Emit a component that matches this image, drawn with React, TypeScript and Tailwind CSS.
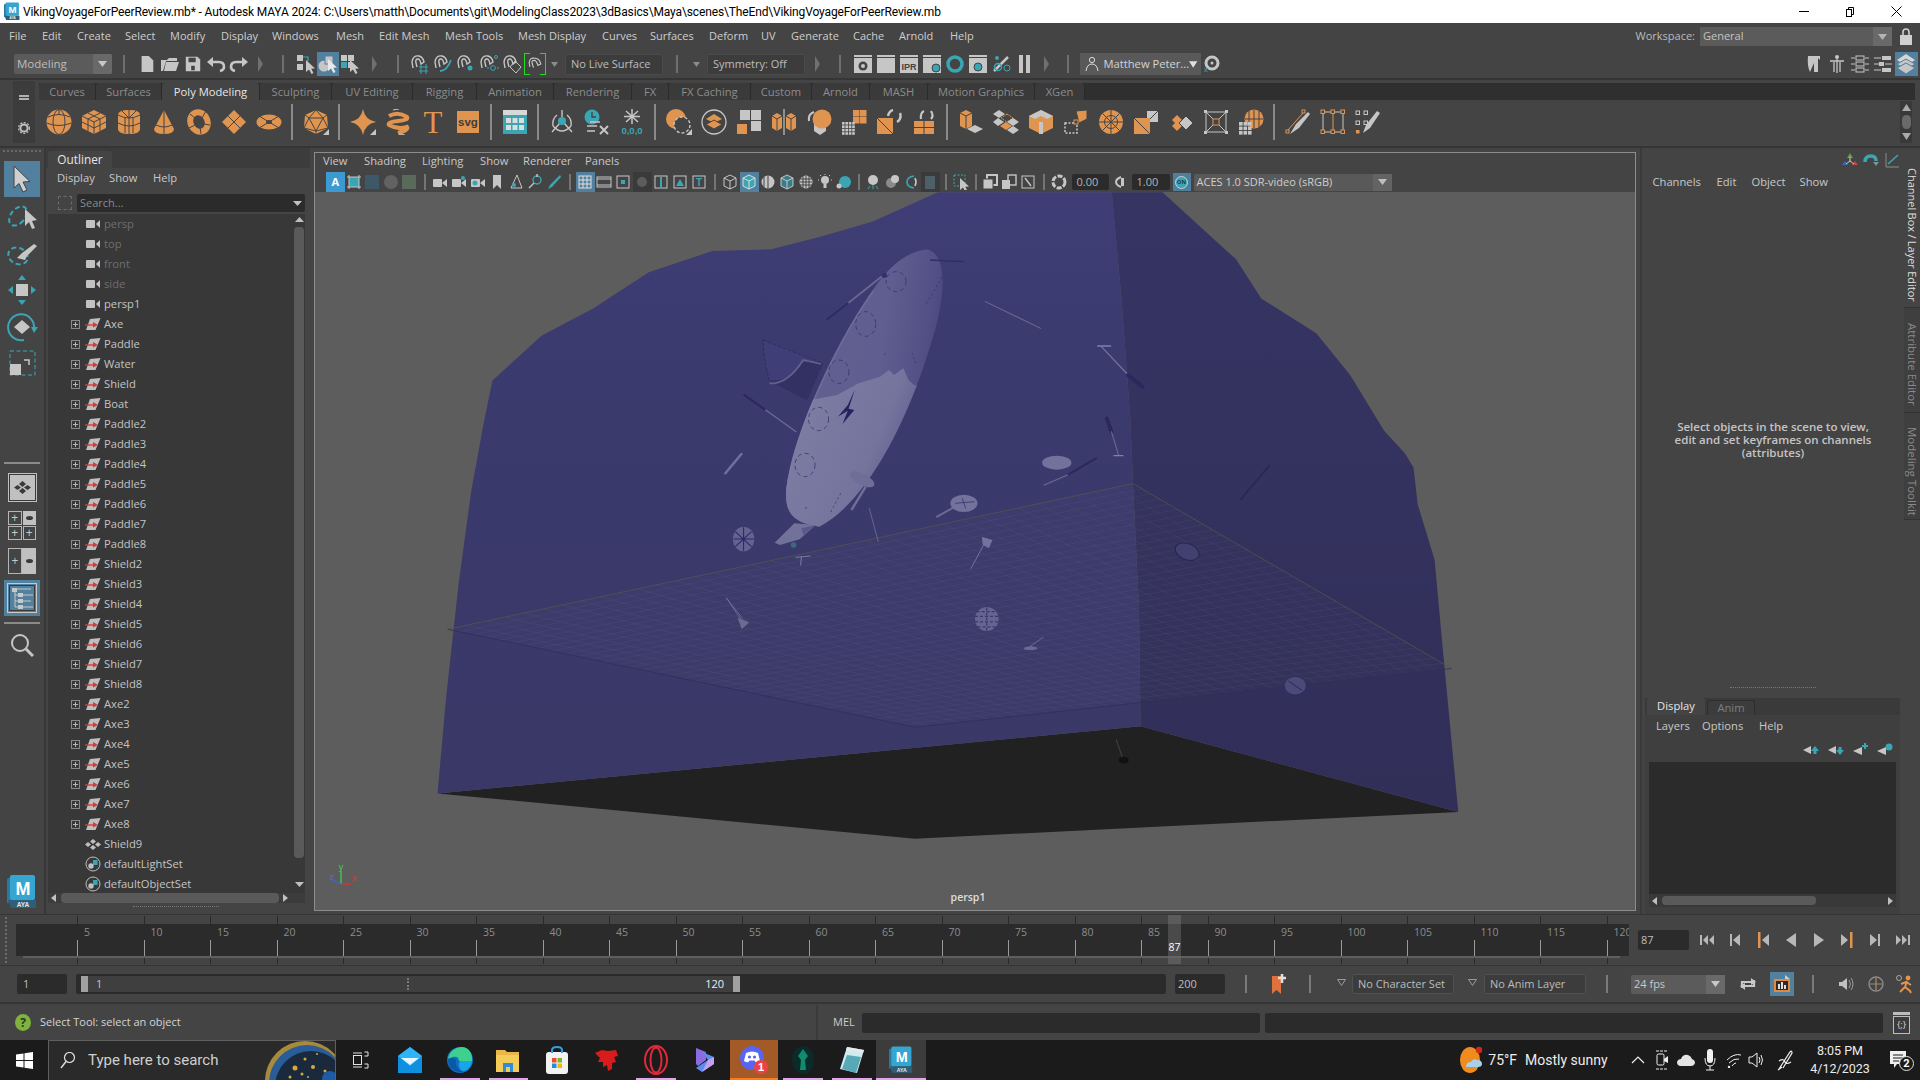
import type { ReactNode } from 'react'

const G = '#c6c6c6'
const O = '#df9450'
const T = '#3aa6b4'
const D = '#444444'

function Ico({ s = 20, vb = 20, children }: { s?: number; vb?: number; children: ReactNode }) {
  return (
    <svg width={s} height={s} viewBox={`0 0 ${vb} ${vb}`} className="block shrink-0">
      {children}
    </svg>
  )
}

const Lines = ({ d, c = D, w = 1 }: { d: string; c?: string; w?: number }) => (
  <path d={d} fill="none" stroke={c} strokeWidth={w} />
)

const Corner = () => <polygon points="26,20 26,26 20,26" fill={G} />

const Cur = ({ x = 0, y = 0, c = G }: { x?: number; y?: number; c?: string }) => (
  <path transform={`translate(${x} ${y})`} d="M0 0 L0 12 L3 9.5 L5.5 14 L7.5 13 L5.3 8.7 L9 8.5 Z" fill={c} />
)

/* ---------- shelf icons ---------- */
const shelfIcons: (ReactNode | 'sep')[] = [
  <Ico s={26} vb={26}><circle cx="13" cy="13" r="12.5" fill={O} /><ellipse cx="13" cy="13" rx="6" ry="12.5" fill="none" stroke={D} /><Lines d="M2 8 Q13 3 24 8 M.5 14 Q13 19 25.5 14 M13 .5 V6" /></Ico>,
  <Ico s={26} vb={26}><polygon points="13,1 25,7 25,19 13,25 1,19 1,7" fill={O} /><Lines d="M1 7 L13 13 L25 7 M13 13 V25 M7 4 L19 10 V22 M19 4 L7 10 V22 M1 13 L13 19 L25 13" /></Ico>,
  <Ico s={26} vb={26}><path d="M2 6 Q2 1 13 1 Q24 1 24 6 V20 Q24 25 13 25 Q2 25 2 20 Z" fill={O} /><Lines d="M2 6 Q13 12 24 6 M2 14 Q13 20 24 14 M13 1 V25 M6 2 L13 9 L20 2 M9 9 V24 M17 9 V24" /></Ico>,
  <Ico s={26} vb={26}><path d="M13 1 L23 20 Q23 25 13 25 Q3 25 3 20 Z" fill={O} /><Lines d="M13 1 V25 M5 16 Q13 20 21 16" /></Ico>,
  <Ico s={26} vb={26}><ellipse cx="13" cy="13" rx="8.5" ry="10" transform="rotate(-25 13 13)" fill="none" stroke={O} strokeWidth="6" /><Lines d="M4 5 L10 10 M20 2 L16 9 M24 16 L18 15 M15 25 L14 18 M3 19 L9 16" /></Ico>,
  <Ico s={26} vb={26}><polygon points="13,1 25,13 13,25 1,13" fill={O} /><Lines d="M7 7 L19 19 M19 7 L7 19" /></Ico>,
  <Ico s={26} vb={26}><ellipse cx="13" cy="13" rx="12.5" ry="7.5" fill={O} /><Lines d="M3 7 L23 19 M23 7 L3 19" /><ellipse cx="13" cy="13" rx="3" ry="2" fill={D} /></Ico>,
  'sep',
  <Ico s={26} vb={26}><polygon points="13,1 24,6 25,19 13,25 1,19 2,6" fill={O} /><Lines d="M13 1 L6 9 L20 9 Z M6 9 L13 22 L20 9 M6 9 L2 6 M6 9 L1 19 M20 9 L24 6 M20 9 L25 19 M13 22 V25 M13 22 L1 19 M13 22 L25 19" /><Corner /></Ico>,
  'sep',
  <Ico s={26} vb={26}><path d="M13 0 Q15 11 26 13 Q15 15 13 26 Q11 15 0 13 Q11 11 13 0 Z" fill={O} /><Corner /></Ico>,
  <Ico s={26} vb={26}><Lines d="M4 7 Q13 2 22 8 Q24 11 13 12 Q2 13 4 16 Q13 21 22 18 Q24 21 13 24" c={O} w={4} /><Lines d="M8 1 L14 0 M14 25 L20 26" c={G} /></Ico>,
  <Ico s={26} vb={26}><text x="13" y="24" textAnchor="middle" fontFamily="'Liberation Serif',serif" fontSize="31" fill={O}>T</text></Ico>,
  <Ico s={26} vb={26}><rect x="2" y="2" width="22" height="22" fill={O} /><text x="13" y="16.5" textAnchor="middle" fontFamily="'Liberation Sans',sans-serif" fontWeight="700" fontSize="11.5" fill="#3c3c3c">svg</text></Ico>,
  'sep',
  <Ico s={26} vb={26}><rect x="1" y="1" width="24" height="24" fill={T} /><rect x="1" y="1" width="24" height="5" fill="#d8d8d8" /><g fill="#dcdcdc"><rect x="4" y="9" width="5" height="5" /><rect x="10.5" y="9" width="5" height="5" /><rect x="17" y="9" width="5" height="5" /><rect x="4" y="16" width="5" height="5" /><rect x="10.5" y="16" width="5" height="5" /><rect x="17" y="16" width="5" height="5" /></g></Ico>,
  'sep',
  <Ico s={26} vb={26}><Lines d="M13 1 V8 M11 14 L3 23 M15 14 L23 23 M4 17 Q13 27 22 17 M8 6 Q3 10 4 17 M18 6 Q23 10 22 17" c={G} w={1.4} /><circle cx="13" cy="12" r="4" fill={T} /></Ico>,
  <Ico s={26} vb={26}><circle cx="8" cy="8" r="7.5" fill={T} /><Lines d="M8 3 V8 H12" c={D} w={1.4} /><Lines d="M3 17 H13 M3 22 H11 M6 13 H16" c={G} w={1.4} /><Lines d="M16 17 L24 25 M24 17 L16 25" c={G} w={2} /></Ico>,
  <Ico s={26} vb={26}><Lines d="M13 0 V15 M7 2 L19 13 M19 2 L7 13 M5 7.5 H21" c={G} w={1.5} /><text x="13" y="25" textAnchor="middle" fontFamily="'Liberation Sans',sans-serif" fontWeight="700" fontSize="9.5" fill={T}>0,0,0</text></Ico>,
  'sep',
  <Ico s={26} vb={26}><circle cx="10" cy="10" r="10" fill={O} /><circle cx="16" cy="16" r="8" fill={D} stroke={G} strokeDasharray="3 2" strokeWidth="1.4" /><Corner /></Ico>,
  <Ico s={26} vb={26}><circle cx="13" cy="13" r="12" fill="none" stroke={G} strokeWidth="1.3" /><polygon points="13,5 21,10 13,14 5,10" fill={O} /><polygon points="13,11 21,15.5 13,20 5,15.5" fill={O} stroke={D} /></Ico>,
  <Ico s={26} vb={26}><rect x="4" y="1" width="10" height="10" fill={G} /><rect x="15" y="1" width="10" height="10" fill={G} /><rect x="15" y="12" width="10" height="10" fill={G} /><rect x="1" y="15" width="10" height="10" fill={O} /></Ico>,
  <Ico s={26} vb={26}><path d="M1 7 L6 4 L11 7 V19 L6 22 L1 19 Z M15 7 L20 4 L25 7 V19 L20 22 L15 19 Z" fill={O} /><Lines d="M1 7 L6 10 L11 7 M6 10 V22 M15 7 L20 10 L25 7 M20 10 V22" /><Lines d="M13 0 V26" c="#d8d8d8" /></Ico>,
  <Ico s={26} vb={26}><polygon points="8,13 14,10 20,13 20,22 14,26 8,22" fill={G} /><circle cx="16" cy="10" r="9.5" fill={O} /><Lines d="M3 12 Q2 5 8 3" c={G} w={2} /></Ico>,
  <Ico s={26} vb={26}><g fill={O}><rect x="12" y="1" width="6.5" height="6.5" /><rect x="19" y="1" width="6.5" height="6.5" /><rect x="12" y="8" width="6.5" height="6.5" /><rect x="19" y="8" width="6.5" height="6.5" /></g><g fill={G}>{[0, 1, 2, 3].map((a) => [0, 1, 2, 3].map((b) => <rect key={`${a}${b}`} x={1 + a * 3.4} y={13 + b * 3.4} width="2.6" height="2.6" />))}</g></Ico>,
  <Ico s={26} vb={26}><rect x="1" y="9" width="16" height="16" fill={O} /><Lines d="M1 9 L17 25" /><Lines d="M12 7 Q13 2 17 1 M24 4 Q26 10 21 13" c={G} w={2.4} /></Ico>,
  <Ico s={26} vb={26}><g fill={O}><rect x="3" y="12" width="9.5" height="6" /><rect x="13.5" y="12" width="9.5" height="6" /><rect x="3" y="19" width="9.5" height="6" /><rect x="13.5" y="19" width="9.5" height="6" /></g><Lines d="M10 10 Q9 4 13 2 M20 2 Q23 7 20 10" c={G} w={2.2} /></Ico>,
  'sep',
  <Ico s={26} vb={26}><polygon points="11,18 19,22 11,26 3,22" fill={G} transform="translate(6 -2)" /><path d="M2 4 L8 1 L14 4 V17 L8 20 L2 17 Z" fill={O} /><Lines d="M2 4 L8 7 L14 4 M8 7 V20" /></Ico>,
  <Ico s={26} vb={26}><polygon points="6,1 12,5 6,9 0,5" fill={G} /><polygon points="14,5 20,9 14,13 8,9" fill="none" stroke={O} strokeDasharray="2 1" /><polygon points="20,9 26,13 20,17 14,13" fill={G} /><polygon points="5,9 11,13 5,17 0,13" fill={G} /><polygon points="13,13 19,17 13,21 7,17" fill={O} /><polygon points="20,17 26,21 20,25 14,21" fill={G} /></Ico>,
  <Ico s={26} vb={26}><polygon points="13,1 25,7 25,19 13,25 1,19 1,7" fill={O} /><polygon points="13,1 25,7 19,10 13,7 7,10 1,7" fill={G} /><rect x="11" y="13" width="4" height="12" fill={G} /></Ico>,
  <Ico s={26} vb={26}><polygon points="13,2 24,1 24,10 16,14" fill={O} stroke={D} /><rect x="2" y="14" width="12" height="10" fill="none" stroke={G} strokeDasharray="2 1.5" strokeWidth="1.5" /><rect x="11" y="11" width="4" height="4" fill={D} stroke={O} /></Ico>,
  <Ico s={26} vb={26}><circle cx="13" cy="13" r="12" fill={O} /><circle cx="13" cy="13" r="6.5" fill="none" stroke={D} /><Lines d="M1 13 H25 M13 1 V25 M4.5 4.5 L21.5 21.5 M21.5 4.5 L4.5 21.5" /></Ico>,
  <Ico s={26} vb={26}><polygon points="14,2 25,2 25,13 14,13" fill={G} /><Lines d="M14 13 L25 2" /><rect x="1" y="9" width="16" height="16" fill={O} /><Lines d="M1 9 L17 25" /></Ico>,
  <Ico s={26} vb={26}><polygon points="9,6 14,11 9,16 4,11" fill={O} /><polygon points="9,12 14,17 9,22 4,17" fill={O} /><polygon points="18,7 25,14 18,21 11,14" fill={G} stroke={D} /></Ico>,
  <Ico s={26} vb={26}><rect x="3" y="3" width="20" height="20" fill="none" stroke={G} /><Lines d="M3 3 L10 10 M23 3 L16 10 M3 23 L10 16 M23 23 L16 16" c={G} /><rect x="10" y="10" width="6" height="6" fill="none" stroke={O} /><g fill={G}><rect x="1" y="1" width="3" height="3" /><rect x="22" y="1" width="3" height="3" /><rect x="1" y="22" width="3" height="3" /><rect x="22" y="22" width="3" height="3" /></g></Ico>,
  <Ico s={26} vb={26}><circle cx="16" cy="10" r="9.5" fill={O} /><Lines d="M7 10 H25 M16 1 V19 M11 2 V18 M21 2 V18" /><g fill={G}>{[0, 1, 2].map((a) => [0, 1, 2].map((b) => <rect key={`${a}${b}`} x={1 + a * 4.5} y={13 + b * 4.5} width="3.6" height="3.6" />))}</g></Ico>,
  'sep',
  <Ico s={26} vb={26}><Lines d="M3 21 L18 4" c={O} w={1} /><rect x="1" y="21" width="3" height="3" fill="none" stroke={O} /><rect x="17" y="1" width="3" height="3" fill="none" stroke={O} /><path d="M25 5 L23 3 L11 15 L5 25 L14 19 Z" fill={G} /></Ico>,
  <Ico s={26} vb={26}><rect x="3" y="3" width="20" height="20" fill="none" stroke={G} /><g fill={D} stroke={O}><rect x="1" y="1" width="3.5" height="3.5" /><rect x="11" y="1" width="3.5" height="3.5" /><rect x="21" y="1" width="3.5" height="3.5" /><rect x="1" y="21" width="3.5" height="3.5" /><rect x="11" y="21" width="3.5" height="3.5" /><rect x="21" y="21" width="3.5" height="3.5" /></g><Lines d="M13 4 V21" c={O} /></Ico>,
  <Ico s={26} vb={26}><g fill="none" stroke={G}><rect x="1" y="2" width="3.5" height="3.5" /><rect x="9" y="2" width="3.5" height="3.5" /><rect x="1" y="12" width="3.5" height="3.5" /><rect x="9" y="12" width="3.5" height="3.5" /></g><rect x="1" y="21" width="3.5" height="3.5" fill={O} /><path d="M25 4 L22 2 L11 16 L8 24 L15 19 Z" fill={G} /></Ico>,
]

/* ---------- status line ---------- */
const StatusSep = ({ w }: { w: string }) => (
  <div className={`${w} h-full flex items-center justify-center shrink-0`}>
    <div className="w-[2px] h-[18px] bg-[#6f6f6f]" />
  </div>
)

const StatusArrow = ({ w }: { w: string }) => (
  <div className={`${w} h-full flex items-center justify-center shrink-0`}>
    <svg width="5" height="16" viewBox="0 0 5 16"><polygon points="0,0 5,8 0,16" fill="#707070" /></svg>
  </div>
)

const StatusTri = ({ w }: { w: string }) => (
  <div className={`${w} h-full flex items-center justify-center shrink-0`}>
    <svg width="7" height="5" viewBox="0 0 7 5"><polygon points="0,0 7,0 3.5,5" fill="#8c8c8c" /></svg>
  </div>
)

const SlotB = ({ children, on, w = 'w-[22px]' }: { children: ReactNode; on?: boolean; w?: string }) => (
  <div className={`${w} h-[24px] flex items-center justify-center shrink-0 ${on ? 'bg-[#52809f]' : ''}`}>{children}</div>
)

const Magnet = ({ children }: { children?: ReactNode }) => (
  <Ico s={22} vb={22}>
    <Lines d="M4 15 L3 9 Q4 2 10 3 Q14 4 15 9 L12 11 Q11 6 9 6 Q6 6 7 10 L8 14" c={G} w={1.4} />
    {children}
  </Ico>
)

const Clap = ({ children }: { children?: ReactNode }) => (
  <Ico s={22} vb={22}>
    <Lines d="M2 3 H20" c={G} w={2} />
    <rect x="2" y="5" width="18" height="15" fill={G} />
    {children}
  </Ico>
)

function StatusLine() {
  return (
    <div className="h-[28px] flex items-center pl-[14px] pr-[2.5px] bg-[#444444] shrink-0">
      <div className="w-[98px] h-[20px] flex bg-[#5b5b5b] rounded-[2px] shrink-0 text-[#bdbdbd] text-[11.5px] items-center">
        <span className="flex-1 pl-[3px]">Modeling</span>
        <div className="w-[19px] h-full bg-[#696969] flex items-center justify-center rounded-r-[2px]">
          <svg width="9" height="6" viewBox="0 0 9 6"><polygon points="0,0 9,0 4.5,6" fill="#c8c8c8" /></svg>
        </div>
      </div>
      <StatusSep w="w-[23px]" />
      <SlotB w="w-[23px]"><Ico s={18} vb={20}><path d="M4 1 H12 L17 6 V19 H4 Z" fill={G} /></Ico></SlotB>
      <SlotB w="w-[23px]"><Ico s={20} vb={20}><path d="M1 6 H7 L9 4 H17 V7 H6 L3 17 H1 Z M6 8 H19 L16 17 H4 Z" fill={G} /></Ico></SlotB>
      <SlotB w="w-[23px]"><Ico s={18} vb={20}><path d="M2 2 H15 L18 5 V18 H2 Z" fill={G} /><rect x="5" y="3" width="8" height="5" fill={D} /><rect x="8" y="12" width="4" height="5" fill={D} /></Ico></SlotB>
      <SlotB w="w-[23px]"><Ico s={20} vb={20}><polygon points="1,8 7,3 7,13" fill={G} /><Lines d="M6 8 H13 Q18 8 18 13 Q18 16 14 17" c={G} w={2.6} /></Ico></SlotB>
      <SlotB w="w-[23px]"><Ico s={20} vb={20}><polygon points="19,8 13,3 13,13" fill={G} /><Lines d="M14 8 H7 Q2 8 2 13 Q2 16 6 17" c={G} w={2.6} /></Ico></SlotB>
      <StatusArrow w="w-[20px]" />
      <StatusSep w="w-[25px]" />
      <SlotB><Ico s={20} vb={20}><rect x="1" y="1" width="6" height="6" fill={G} /><rect x="1" y="10" width="6" height="6" fill={G} /><Lines d="M7 3 H12 V7" c={T} w={1.2} /><Cur x={10} y={6} /></Ico></SlotB>
      <SlotB on><Ico s={20} vb={20}><circle cx="6" cy="12" r="5.5" fill={G} /><rect x="7" y="2" width="8" height="8" fill={G} stroke="#52809f" /><Cur x={10} y={5} c="#e8e8e8" /></Ico></SlotB>
      <SlotB><Ico s={20} vb={20}><rect x="1" y="1" width="6" height="6" fill={G} /><rect x="8" y="1" width="6" height="6" fill={G} /><rect x="1" y="8" width="6" height="6" fill={T} /><rect x="8" y="8" width="4" height="6" fill={G} /><Cur x={10} y={6} /></Ico></SlotB>
      <StatusArrow w="w-[26px]" />
      <StatusSep w="w-[21px]" />
      <SlotB w="w-[23px]"><Magnet><Lines d="M10 14 H19 M10 18 H19 M12 11 V21 M17 11 V21" c={T} w={1} /></Magnet></SlotB>
      <SlotB w="w-[23px]"><Magnet><Lines d="M8 18 Q15 18 19 7" c={T} w={1.8} /></Magnet></SlotB>
      <SlotB w="w-[23px]"><Magnet><circle cx="15" cy="15" r="2.5" fill={T} /></Magnet></SlotB>
      <SlotB w="w-[23px]"><Magnet><circle cx="15" cy="15" r="2.4" fill="none" stroke={T} /><circle cx="18" cy="4" r="1.5" fill="none" stroke={T} /><Lines d="M11 15 H9 M19 15 H21" c={T} /></Magnet></SlotB>
      <SlotB w="w-[23px]"><Magnet><polygon points="14,8 20,14 15,20 9,14" fill="none" stroke={G} /></Magnet></SlotB>
      <SlotB w="w-[23px]">
        <div className="w-[22px] h-[22px] flex items-center justify-center bg-[linear-gradient(#22dd22,#22dd22),linear-gradient(#22dd22,#22dd22),linear-gradient(#22dd22,#22dd22),linear-gradient(#22dd22,#22dd22),linear-gradient(#22dd22,#22dd22),linear-gradient(#22dd22,#22dd22)] bg-[length:6px_1px,6px_1px,6px_1px,6px_1px,1px_100%,1px_100%] bg-[position:0_0,100%_0,0_100%,100%_100%,0_0,100%_0] bg-no-repeat">
          <Ico s={16} vb={22}><Lines d="M4 15 L3 9 Q4 2 10 3 Q17 3 19 11 L15 13 Q13 6 10 6 Q6 6 7 10 L9 16" c={G} w={1.6} /></Ico>
        </div>
      </SlotB>
      <StatusTri w="w-[16px]" />
      <div className="ml-[3px] w-[98px] h-[21px] bg-[#3c3c3c] border border-[#4a4a4a] rounded-[2px] flex items-center pl-[5px] text-[11px] text-[#bcbcbc] shrink-0">No Live Surface</div>
      <StatusSep w="w-[28px]" />
      <StatusTri w="w-[10px]" />
      <div className="ml-[6px] w-[98px] h-[21px] bg-[#3c3c3c] border border-[#4a4a4a] rounded-[2px] flex items-center pl-[5px] text-[11px] text-[#bcbcbc] shrink-0">Symmetry: Off</div>
      <StatusArrow w="w-[24px]" />
      <StatusSep w="w-[22.5px]" />
      <SlotB w="w-[23px]"><Clap><circle cx="11" cy="13" r="4.5" fill={D} /><circle cx="11" cy="13" r="2" fill={G} /></Clap></SlotB>
      <SlotB w="w-[23px]"><Clap /></SlotB>
      <SlotB w="w-[23px]"><Clap><text x="11" y="17" textAnchor="middle" fontFamily="'Liberation Sans',sans-serif" fontWeight="700" fontSize="9" fill={D}>IPR</text></Clap></SlotB>
      <SlotB w="w-[23px]"><Clap><circle cx="15" cy="15" r="4" fill={T} stroke={D} /></Clap></SlotB>
      <SlotB w="w-[23px]"><Ico s={22} vb={22}><circle cx="11" cy="11" r="7" fill="none" stroke={T} strokeWidth="3.5" /></Ico></SlotB>
      <SlotB w="w-[23px]"><Clap><circle cx="11" cy="14" r="4" fill={T} stroke={D} /></Clap></SlotB>
      <SlotB w="w-[23px]"><Ico s={22} vb={22}><Lines d="M4 18 L18 4" c={G} w={2.5} /><circle cx="8" cy="14" r="3.5" fill="none" stroke={T} strokeWidth="1.4" /><circle cx="17" cy="15" r="3" fill="none" stroke={T} /><circle cx="7" cy="5" r="2" fill={T} /></Ico></SlotB>
      <SlotB w="w-[23px]"><div className="flex gap-[3px]"><div className="w-[4px] h-[18px] bg-[#c6c6c6]" /><div className="w-[4px] h-[18px] bg-[#c6c6c6]" /></div></SlotB>
      <StatusArrow w="w-[21px]" />
      <StatusSep w="w-[23px]" />
      <div className="w-[121px] h-[22px] bg-[#595959] flex items-center pl-[4px] shrink-0 text-[11.2px] text-[#d4d4d4]">
        <Ico s={16} vb={16}><circle cx="8" cy="4" r="2.6" fill="none" stroke="#dddddd" /><Lines d="M2 15 Q3 8 8 8 Q13 8 14 15" c="#dddddd" /></Ico>
        <span className="ml-[4px] whitespace-nowrap">Matthew Peter...</span>
        <svg className="ml-auto mr-[3px]" width="9" height="7" viewBox="0 0 9 7"><polygon points="0,0 9,0 4.5,7" fill="#e0e0e0" /></svg>
      </div>
      <SlotB w="w-[21px]"><Ico s={18} vb={18}><circle cx="10" cy="8" r="6" fill="none" stroke={G} strokeWidth="3" /><circle cx="10" cy="8" r="1.5" fill={G} /><text x="2" y="17" fontFamily="'Liberation Sans',sans-serif" fontSize="8" fill={T}>x</text></Ico></SlotB>
      <div className="flex-1" />
      <SlotB w="w-[23px]"><Ico s={20} vb={20}><path d="M4 2 H16 V6 L14 4 V18 H10 V9 L6 18 Q3 12 4 2 Z" fill={G} /></Ico></SlotB>
      <SlotB w="w-[23px]"><Ico s={20} vb={20}><circle cx="10" cy="3" r="2" fill={G} /><Lines d="M3 7 H17 M10 5 V19 M7 8 V18 M13 8 V18" c={G} w={1.3} /></Ico></SlotB>
      <SlotB w="w-[23px]"><Ico s={20} vb={20}><Lines d="M1 4 H5 M15 4 H19 M1 10 H5 M15 10 H19 M1 16 H5 M15 16 H19" c={G} /><g fill="none" stroke={G}><rect x="6" y="2" width="8" height="4" /><rect x="6" y="8" width="8" height="4" /><rect x="6" y="14" width="8" height="4" /></g></Ico></SlotB>
      <SlotB w="w-[23px]"><Ico s={20} vb={20}><Lines d="M1 4 H8 M1 10 H6 M12 10 H19 M1 16 H8" c={G} /><g fill={G}><rect x="9" y="2" width="9" height="4" /><rect x="6" y="8" width="5" height="4" /><rect x="9" y="14" width="9" height="4" /></g></Ico></SlotB>
      <SlotB on w="w-[23px]"><Ico s={22} vb={22}><polygon points="11,1 20,7 11,13 2,7" fill="#d6d6d6" /><polygon points="11,6 20,11 11,17 2,11" fill={G} stroke="#52809f" /><polygon points="11,10 20,15 11,21 2,15" fill={G} stroke="#52809f" /></Ico></SlotB>
    </div>
  )
}

/* ---------- shelf ---------- */
const shelfTabs: [string, string, boolean?][] = [
  ['Curves', 'w-[57px]'],
  ['Surfaces', 'w-[66px]'],
  ['Poly Modeling', 'w-[98px]', true],
  ['Sculpting', 'w-[72px]'],
  ['UV Editing', 'w-[81px]'],
  ['Rigging', 'w-[64px]'],
  ['Animation', 'w-[77px]'],
  ['Rendering', 'w-[78px]'],
  ['FX', 'w-[37px]'],
  ['FX Caching', 'w-[82px]'],
  ['Custom', 'w-[61px]'],
  ['Arnold', 'w-[58px]'],
  ['MASH', 'w-[58px]'],
  ['Motion Graphics', 'w-[107px]'],
  ['XGen', 'w-[50px]'],
]

function Shelf() {
  return (
    <div className="h-[66px] flex bg-[#444444] shrink-0 pl-[13px]">
      <div className="w-[22px] mt-[1px] mb-[3px] bg-[#3c3c3c] flex flex-col items-center justify-between pt-[14px] pb-[9px] shrink-0">
        <div className="w-[10px] h-[5px] border-y-2 border-[#b0b0b0]" />
        <svg width="12" height="12" viewBox="0 0 12 12"><circle cx="6" cy="6" r="3.6" fill="none" stroke="#c0c0c0" strokeWidth="2" /><circle cx="6" cy="6" r="5.4" fill="none" stroke="#c0c0c0" strokeWidth="1.2" strokeDasharray="2 1.5" /></svg>
      </div>
      <div className="flex-1 min-w-0 flex flex-col pl-[4px] pt-[3px]">
        <div className="h-[17px] bg-[#2f2f2f] flex items-end mr-[5px] shrink-0">
          {shelfTabs.map(([n, w, on]) => (
            <div
              key={n}
              className={`${w} h-[17px] shrink-0 flex items-center justify-center rounded-t-[3px] border-r border-[#2a2a2a] text-[11.2px] leading-[16px] whitespace-nowrap ${on ? 'bg-[#444444] text-[#e6e6e6]' : 'bg-[#3a3a3a] text-[#8c8c8c]'}`}
            >
              {n}
            </div>
          ))}
        </div>
        <div className="flex-1 flex items-center pl-[2px] pb-[2px]">
          {shelfIcons.map((ic, i) =>
            ic === 'sep' ? (
              <div key={i} className="w-[12px] flex justify-center shrink-0">
                <div className="w-[2px] h-[36px] bg-[#8a8a8a]" />
              </div>
            ) : (
              <div key={i} className="w-[35px] flex justify-center shrink-0">{ic}</div>
            ),
          )}
          <div className="flex-1" />
          <div className="w-[12px] h-[42px] mr-[8px] bg-[#393939] flex flex-col items-center justify-between py-[3px]">
            <svg width="9" height="7" viewBox="0 0 9 7"><polygon points="0,7 9,7 4.5,0" fill="#aaaaaa" /></svg>
            <div className="w-[9px] h-[14px] rounded-full bg-[#6a6a6a]" />
            <svg width="9" height="7" viewBox="0 0 9 7"><polygon points="0,0 9,0 4.5,7" fill="#aaaaaa" /></svg>
          </div>
        </div>
      </div>
    </div>
  )
}

/* ---------- tool box ---------- */
const Brush = () => <path d="M30 9 L33 11 L23 21 L21 25 L13 23 L18 18 Z" fill={G} />

function ToolBox() {
  const cell = 'h-[36px] flex items-center justify-center shrink-0'
  return (
    <div className="w-[44px] shrink-0 flex flex-col px-[4px]">
      <div className="h-[5px] mx-[-1px] mt-[2px] border-t-2 border-dotted border-[#6a6a6a] shrink-0" />
      <div className="h-[6px] shrink-0" />
      <div className={`${cell} bg-[#52809f]`}>
        <svg width="20" height="28" viewBox="0 0 20 28"><path d="M2 1 L2 23 L7 18.5 L11 27 L15 25 L11 17 L18 16.5 Z" fill="#cfcfcf" stroke="#444444" /></svg>
      </div>
      <div className={`${cell} mt-[2px]`}>
        <Ico s={36} vb={36}><ellipse cx="14" cy="17" rx="7" ry="11" transform="rotate(40 14 17)" fill="none" stroke={T} strokeWidth="2" strokeDasharray="5 3" /><path d="M21 10 L21 27 L25 23 L28 30 L31 29 L28 22 L33 21 Z" fill={G} /></Ico>
      </div>
      <div className={`${cell}`}>
        <Ico s={36} vb={36}><ellipse cx="14" cy="21" rx="10" ry="8" transform="rotate(25 14 21)" fill="none" stroke={T} strokeWidth="2" strokeDasharray="5 3" /><Brush /></Ico>
      </div>
      <div className={`${cell} mt-[1px]`}>
        <Ico s={36} vb={36}><rect x="12" y="12" width="12" height="12" fill={G} /><g fill={T}><polygon points="18,3 22,8 14,8" /><polygon points="18,33 22,28 14,28" /><polygon points="4,18 9,14 9,22" /><polygon points="32,18 27,14 27,22" /></g></Ico>
      </div>
      <div className={`${cell} mt-[1px]`}>
        <Ico s={36} vb={36}><Lines d="M30 20 A13 13 0 1 0 20 31" c={T} w={2} /><polygon points="30,24 34,18 27,18" fill={T} /><polygon points="18,11 26,18 18,25 10,18" fill={G} /></Ico>
      </div>
      <div className={`${cell}`}>
        <Ico s={36} vb={36}><rect x="6" y="6" width="25" height="24" fill="none" stroke={T} strokeDasharray="4 2.5" /><rect x="6" y="19" width="11" height="11" fill={G} /><Lines d="M20 15 H25 V20" c={G} w={1.5} /></Ico>
      </div>
      <div className="flex-1" />
      <div className="h-[2px] bg-[#8a8a8a] shrink-0 mb-[9px]" />
      <div className="h-[29px] flex justify-center shrink-0">
        <div className="w-[29px] h-[29px] bg-[#c0c0c0] p-[1px]">
          <div className="w-full h-full border border-[#3a3a3a] flex items-center justify-center">
            <svg width="17" height="13" viewBox="0 0 17 13"><g fill="#3a3a3a"><polygon points="8.5,0 12,3 8.5,6 5,3" /><polygon points="3.5,4 7,6.5 3.5,9 0,6.5" /><polygon points="13.5,4 17,6.5 13.5,9 10,6.5" /><polygon points="8.5,7 12,10 8.5,13 5,10" /></g></svg>
          </div>
        </div>
      </div>
      <div className="h-[28px] mt-[9px] grid grid-cols-2 gap-[1px] px-[4px] shrink-0">
        <div className="border border-[#b5b5b5] flex items-center justify-center text-[#c8c8c8] text-[12px] leading-none">+</div>
        <div className="bg-[#c0c0c0] flex items-center justify-center"><div className="w-[7px] h-[4px] bg-[#3a3a3a] rounded-[50%]" /></div>
        <div className="border border-[#b5b5b5] flex items-center justify-center text-[#c8c8c8] text-[12px] leading-none">+</div>
        <div className="border border-[#b5b5b5] flex items-center justify-center text-[#c8c8c8] text-[12px] leading-none">+</div>
      </div>
      <div className="h-[26px] mt-[9px] flex justify-center shrink-0">
        <div className="w-[14px] h-full border border-[#b5b5b5] flex items-center justify-center text-[#c8c8c8] text-[12px] leading-none">+</div>
        <div className="w-[14px] h-full bg-[#c0c0c0] flex items-center justify-center"><div className="w-[7px] h-[4px] bg-[#3a3a3a] rounded-[50%]" /></div>
      </div>
      <div className={`${cell} mt-[6px] bg-[#52809f]`}>
        <svg width="30" height="30" viewBox="0 0 30 30"><rect x=".5" y=".5" width="29" height="29" fill="none" stroke="#c8c8c8" /><rect x="2.5" y="2.5" width="25" height="25" fill="none" stroke="#3a3a3a" /><Lines d="M8 8 V24 M8 12 H14 M8 18 H14 M8 24 H14 M6 6 H24 M16 12 H26 M16 18 H24 M16 24 H26" c="#c8c8c8" /><g fill="#c8c8c8"><rect x="5" y="5" width="5" height="4" /><rect x="11" y="10" width="5" height="4" /><rect x="11" y="16" width="5" height="4" /><rect x="11" y="22" width="5" height="4" /></g></svg>
      </div>
      <div className="h-[2px] bg-[#8a8a8a] mt-[6px] shrink-0" />
      <div className="h-[36px] mt-[3px] flex items-center justify-center shrink-0">
        <Ico s={24} vb={24}><circle cx="10" cy="10" r="8" fill="none" stroke={G} strokeWidth="2" /><Lines d="M16 16 L23 23" c={G} w={3} /></Ico>
      </div>
      <div className="h-[212px] shrink-0" />
      <div className="h-[34px] flex justify-center shrink-0 mb-[5px]">
        <MayaLogo w={30} h={34} />
      </div>
    </div>
  )
}

function MayaLogo({ w, h }: { w: number; h: number }) {
  return (
    <svg width={w} height={h} viewBox="0 0 30 34">
      <polygon points="0,4 6,1 6,26 0,28" fill="#2a7aa0" />
      <rect x="3" y="0" width="25" height="25" rx="2" fill="#37a5d2" />
      <polygon points="1,25 29,25 29,33 4,33" fill="#2d5f7a" />
      <text x="16" y="20" textAnchor="middle" fontFamily="'Liberation Sans',sans-serif" fontWeight="700" fontSize="18" fill="#ffffff">M</text>
      <text x="16" y="31.5" textAnchor="middle" fontFamily="'Liberation Sans',sans-serif" fontWeight="700" fontSize="6.5" fill="#e8e8e8">AYA</text>
    </svg>
  )
}

/* ---------- outliner ---------- */
const cams = ['persp', 'top', 'front', 'side', 'persp1']
const xforms = [
  'Axe', 'Paddle', 'Water', 'Shield', 'Boat',
  'Paddle2', 'Paddle3', 'Paddle4', 'Paddle5', 'Paddle6', 'Paddle7', 'Paddle8',
  'Shield2', 'Shield3', 'Shield4', 'Shield5', 'Shield6', 'Shield7', 'Shield8',
  'Axe2', 'Axe3', 'Axe4', 'Axe5', 'Axe6', 'Axe7', 'Axe8',
]

const CamIcon = () => (
  <svg width="14" height="8" viewBox="0 0 14 8"><rect width="9" height="8" rx="1" fill="#c2c2c2" /><polygon points="10,4 14,0 14,8" fill="#c2c2c2" /></svg>
)

const XformIcon = () => (
  <svg width="16" height="13" viewBox="0 0 16 13">
    <polygon points="5,1 15.5,0 10.5,12 1,12" fill="#bfbfbf" />
    <path d="M0 7 H9" stroke="#d23c3c" strokeWidth="1.4" />
    <polygon points="8,4 13,7 8,9.5" fill="#d23c3c" />
  </svg>
)

const SetIcon = () => (
  <svg width="16" height="16" viewBox="0 0 16 16">
    <circle cx="8" cy="8" r="7" fill="none" stroke="#bfbfbf" />
    <rect x="8" y="4" width="4.5" height="5" fill={T} />
    <circle cx="6" cy="10" r="2.7" fill="#bfbfbf" />
  </svg>
)

const Row = ({ icon, label, plus, dim }: { icon: ReactNode; label: string; plus?: boolean; dim?: boolean }) => (
  <div className="h-[20px] flex items-center shrink-0">
    <div className="w-[23px] shrink-0" />
    <div className="w-[13px] shrink-0">
      {plus && (
        <div className="w-[9px] h-[9px] border border-[#8a8a8a] flex items-center justify-center text-[#b0b0b0] relative">
          <div className="w-[5px] h-px bg-[#b5b5b5]" />
          <div className="absolute w-px h-[5px] bg-[#b5b5b5]" />
        </div>
      )}
    </div>
    <div className="w-[18px] shrink-0 flex justify-center">{icon}</div>
    <span className={`ml-[2px] whitespace-nowrap text-[11.2px] ${dim ? 'text-[#6e6e6e]' : 'text-[#c4c4c4]'}`}>{label}</span>
  </div>
)

function Outliner() {
  return (
    <div className="w-[266px] shrink-0 flex flex-col bg-[#444444] border-l-2 border-[#383838]">
      <div className="h-[20px] bg-[#3c3c3c] flex items-end pl-[2px] shrink-0">
        <div className="w-[64px] h-[17px] bg-[#444444] rounded-t-[3px] flex items-center justify-center text-[11.8px] text-[#e4e4e4]">Outliner</div>
      </div>
      <div className="h-[21px] flex items-center pl-[11px] text-[11.2px] text-[#c8c8c8] shrink-0">
        <span className="w-[52px]">Display</span>
        <span className="w-[44px]">Show</span>
        <span>Help</span>
      </div>
      <div className="h-[25px] flex items-start pt-[5px] pl-[9px] pr-[5px] shrink-0">
        <div className="w-[20px] h-[18px] flex items-center justify-center">
          <div className="w-[14px] h-[14px] border border-dashed border-[#6c6c6c]" />
        </div>
        <div className="flex-1 h-[18px] ml-[2px] bg-[#2b2b2b] rounded-[2px] flex items-center justify-between px-[3px]">
          <span className="text-[11px] text-[#8a8a8a]">Search...</span>
          <svg width="9" height="5" viewBox="0 0 9 5"><polygon points="0,0 9,0 4.5,5" fill="#c0c0c0" /></svg>
        </div>
      </div>
      <div className="h-[689px] ml-[2px] mr-[5px] bg-[#383838] flex flex-col shrink-0">
        <div className="h-[679px] flex overflow-hidden shrink-0">
          <div className="flex-1 flex flex-col min-w-0">
            {cams.map((c, i) => (
              <Row key={c} icon={<CamIcon />} label={c} dim={i < 4} />
            ))}
            {xforms.map((x) => (
              <Row key={x} icon={<XformIcon />} label={x} plus />
            ))}
            <Row
              icon={
                <svg width="16" height="11" viewBox="0 0 16 11"><g fill="#bfbfbf"><polygon points="8,0 11,2.5 8,5 5,2.5" /><polygon points="3,3 6,5.5 3,8 0,5.5" /><polygon points="13,3 16,5.5 13,8 10,5.5" /><polygon points="8,6 11,8.5 8,11 5,8.5" /></g></svg>
              }
              label="Shield9"
            />
            <Row icon={<SetIcon />} label="defaultLightSet" />
            <Row icon={<SetIcon />} label="defaultObjectSet" />
          </div>
          <div className="w-[10px] mr-[1px] flex flex-col items-center shrink-0">
            <svg className="mt-[3px] shrink-0" width="9" height="5" viewBox="0 0 9 5"><polygon points="0,5 9,5 4.5,0" fill="#c0c0c0" /></svg>
            <div className="w-[10px] h-[631px] mt-[5px] bg-[#5a5a5a] rounded-[4px] shrink-0" />
            <svg className="mt-[24px] shrink-0" width="9" height="5" viewBox="0 0 9 5"><polygon points="0,0 9,0 4.5,5" fill="#c0c0c0" /></svg>
          </div>
        </div>
        <div className="h-[10px] flex items-center bg-[#3c3c3c] shrink-0">
          <svg className="ml-[3px]" width="5" height="8" viewBox="0 0 5 8"><polygon points="5,0 5,8 0,4" fill="#c0c0c0" /></svg>
          <div className="w-[218px] h-[10px] ml-[5px] bg-[#5a5a5a] rounded-[4px]" />
          <svg className="ml-[4px]" width="5" height="8" viewBox="0 0 5 8"><polygon points="0,0 0,8 5,4" fill="#c0c0c0" /></svg>
        </div>
      </div>
      <div className="mt-[3px] ml-[87px] w-[86px] border-t border-dotted border-[#777777]" />
    </div>
  )
}

/* ---------- viewport ---------- */
const GridLines = () => {
  const a = [157, 950]
  const b = [968, 635]
  const c = [1345, 1035]
  const d = [710, 1162]
  const lerp = (p: number[], q: number[], t: number) => [p[0] + (q[0] - p[0]) * t, p[1] + (q[1] - p[1]) * t]
  const segs: string[] = []
  for (let i = 1; i < 36; i++) {
    const t = i / 36
    const p1 = lerp(a, b, t)
    const p2 = lerp(d, c, t)
    const q1 = lerp(a, d, t)
    const q2 = lerp(b, c, t)
    segs.push(`M${p1[0]} ${p1[1]} L${p2[0]} ${p2[1]} M${q1[0]} ${q1[1]} L${q2[0]} ${q2[1]}`)
  }
  return (
    <g>
      <polygon points="157,950 968,635 1345,1035 710,1162" fill="#ffffff" fillOpacity="0.012" />
      <path d={segs.join(' ')} fill="none" stroke="#9a9ab8" strokeOpacity="0.07" strokeWidth="1" vectorEffect="non-scaling-stroke" />
      <path d="M157 950 L968 635 L1345 1035" fill="none" stroke="#54544e" strokeOpacity="0.8" strokeWidth="1" vectorEffect="non-scaling-stroke" />
      <path d="M157 950 L710 1162 L1345 1035" fill="none" stroke="#2f2f56" strokeOpacity="0.8" strokeWidth="1" vectorEffect="non-scaling-stroke" />
    </g>
  )
}

function Scene() {
  return (
    <svg className="block" width="1320" height="718" viewBox="315 192 1320 718">
      <defs>
        <linearGradient id="waterL" x1="0" y1="0" x2="0" y2="1">
          <stop offset="0" stopColor="#3e3d75" />
          <stop offset="0.35" stopColor="#3b3a6e" />
          <stop offset="1" stopColor="#393866" />
        </linearGradient>
        <linearGradient id="waterR" x1="0" y1="0" x2="0" y2="1">
          <stop offset="0" stopColor="#363463" />
          <stop offset="1" stopColor="#312f58" />
        </linearGradient>
        <linearGradient id="hull" x1="0" y1="0.45" x2="1" y2="0.7">
          <stop offset="0" stopColor="#62608f" />
          <stop offset="0.55" stopColor="#605e90" />
          <stop offset="0.82" stopColor="#514f85" />
          <stop offset="1" stopColor="#3f3d74" />
        </linearGradient>
        <linearGradient id="hullLow" x1="0" y1="0.3" x2="1" y2="0.7">
          <stop offset="0" stopColor="#7f7ea4" />
          <stop offset="0.55" stopColor="#75749d" />
          <stop offset="0.85" stopColor="#535187" />
          <stop offset="1" stopColor="#3f3d74" />
        </linearGradient>
        <clipPath id="hullClip">
          <path d="M690 88 C640 95 590 130 540 210 C440 360 310 650 297 820 C295 880 320 910 390 920 C500 860 620 660 700 380 C735 270 745 170 725 120 C715 100 705 90 690 88 Z" />
        </clipPath>
      </defs>

      <rect x="315" y="192" width="1320" height="718" fill="#5d5d5d" />

      <g transform="translate(315 190) scale(0.84502 0.46237)">
        <polygon points="145,1305 977,1160 1353,1345 710,1403" fill="#212121" />
        <polygon
          points="145,1305 155,1100 170,850 185,650 200,500 210,412 268,315 330,255 395,178 470,132 540,128 600,100 660,68 737,5 943,5 955,250 965,500 968,635 975,900 977,1160"
          fill="url(#waterL)"
        />
        <polygon
          points="943,5 1003,5 1045,75 1090,150 1120,235 1185,310 1225,400 1265,520 1290,570 1300,600 1305,680 1325,800 1335,1000 1353,1345 977,1160 975,900 968,635 965,500 955,250"
          fill="url(#waterR)"
        />
        <GridLines />
        {/* lower props */}
        <path d="M1130 595 L1095 670" stroke="#2a2858" strokeWidth="2" vectorEffect="non-scaling-stroke" fill="none" />
        <path d="M487 882 L508 940" stroke="#6a6a92" strokeWidth="1" vectorEffect="non-scaling-stroke" fill="none" />
        <path d="M500 925 L514 935 L505 950 Z" fill="#6a6a92" />
        <ellipse cx="795" cy="928" rx="14" ry="26" fill="#666590" />
        <path d="M783 912 H807 M781 922 H809 M781 934 H809 M784 945 H806 M795 903 V953" stroke="#2f2d66" strokeDasharray="3 2" vectorEffect="non-scaling-stroke" />
        <path d="M862 967 L840 995" stroke="#6a6a92" strokeWidth="1" vectorEffect="non-scaling-stroke" />
        <ellipse cx="847" cy="991" rx="8" ry="4" fill="#6a6a92" />
        <ellipse cx="1160" cy="1072" rx="13" ry="20" fill="#4c4a78" stroke="#2a2858" />
        <path d="M1152 1062 L1168 1082" stroke="#2a2858" vectorEffect="non-scaling-stroke" />
        <path d="M948 1188 L957 1235" stroke="#444444" strokeWidth="1" vectorEffect="non-scaling-stroke" />
        <ellipse cx="957" cy="1233" rx="6" ry="7" fill="#111111" />
      </g>

      <g transform="translate(680 220) scale(0.35714 0.33333)">
        {/* sail */}
        <path d="M232 360 L400 430 L355 540 L250 480 Q235 420 232 360 Z" fill="#3f3e76" stroke="#29275f" strokeWidth="2" strokeDasharray="10 5" />
        <path d="M250 480 Q300 490 345 425 L400 430 L355 540 Z" fill="#333163" />
        <path d="M250 490 Q300 495 345 420 L395 432" fill="none" stroke="#62608f" strokeWidth="5" />

        {/* hull */}
        <path d="M690 88 C640 95 590 130 540 210 C440 360 310 650 297 820 C295 880 320 910 390 920 C500 860 620 660 700 380 C735 270 745 170 725 120 C715 100 705 90 690 88 Z" fill="url(#hull)" />
        <g clipPath="url(#hullClip)">
          <path d="M340 545 L440 525 L500 490 L560 470 L585 450 L600 465 L625 445 L640 480 L655 495 L760 520 L700 960 L250 960 Z" fill="url(#hullLow)" />
          <path d="M297 820 C310 650 440 360 540 210" fill="none" stroke="#8281a8" strokeWidth="10" strokeOpacity="0.35" />
        </g>
        <polygon points="490,508 470,555 442,590 470,572 455,612 488,570 472,566" fill="#24225f" />
        <g fill="none" stroke="#2c2a64" strokeWidth="2" strokeDasharray="12 9">
          <ellipse cx="605" cy="185" rx="28" ry="30" />
          <ellipse cx="520" cy="312" rx="28" ry="37" />
          <ellipse cx="445" cy="455" rx="28" ry="35" />
          <ellipse cx="388" cy="597" rx="28" ry="35" />
          <ellipse cx="350" cy="735" rx="28" ry="35" />
        </g>
        <path d="M700 120 L795 125" stroke="#2f2d6a" strokeWidth="4" />
        <path d="M690 250 L735 170 M660 430 L650 400 M575 400 L570 405 M350 865 L360 860 M450 820 L420 880" stroke="#2c2a64" strokeWidth="2" strokeDasharray="6 8" fill="none" />

        {/* stern, rudder */}
        <polygon points="320,910 380,915 335,958 280,975 265,968" fill="#72719a" />
        <polygon points="340,925 380,915 345,945" fill="#5a588a" />
        <circle cx="318" cy="975" r="8" fill="#3c6a78" />
        <ellipse cx="510" cy="778" rx="38" ry="17" transform="rotate(30 510 778)" fill="#6f6e98" />
        <path d="M520 800 L480 870" stroke="#6f6e98" strokeWidth="7" />

        {/* oars & axes */}
        <g fill="none" strokeLinecap="round">
          <path d="M570 165 L470 250" stroke="#6a6994" strokeWidth="5" />
          <path d="M470 250 L410 300" stroke="#2c2a64" strokeWidth="5" strokeDasharray="4 4" />
          <circle cx="572" cy="166" r="8" fill="#34326a" stroke="none" />
          <path d="M855 245 L1010 325" stroke="#6a6994" strokeWidth="3" />
          <path d="M1180 380 L1255 465" stroke="#6f6e98" strokeWidth="4" />
          <path d="M1255 465 L1295 500" stroke="#2a285e" strokeWidth="12" />
          <path d="M1170 378 L1205 378" stroke="#8080a8" strokeWidth="5" />
          <path d="M180 525 L240 570" stroke="#2a285e" strokeWidth="6" strokeDasharray="6 3" />
          <path d="M240 570 L325 635" stroke="#6a6994" strokeWidth="4" />
          <path d="M1195 595 L1208 635" stroke="#2a285e" strokeWidth="11" />
          <path d="M1208 635 L1228 705" stroke="#6a6994" strokeWidth="3" />
          <path d="M1215 707 L1240 707" stroke="#8080a8" strokeWidth="4" />
          <path d="M1165 715 L1085 765" stroke="#2a285e" strokeWidth="6" />
          <path d="M1085 765 L1020 795" stroke="#6a6994" strokeWidth="4" />
          <path d="M172 702 L127 760" stroke="#7070a0" strokeWidth="7" />
          <path d="M530 865 L555 965" stroke="#7a7aa0" strokeWidth="2" />
          <path d="M815 1045 L855 965" stroke="#7a7aa0" strokeWidth="2.5" />
          <path d="M720 890 L770 860" stroke="#6a6994" strokeWidth="6" />
          <path d="M325 1012 L365 1008 M340 1010 L338 1035" stroke="#7a7aa0" strokeWidth="3" />
          <path d="M130 1135 L175 1195" stroke="#7a7aa0" strokeWidth="2" />
        </g>
        <ellipse cx="1055" cy="728" rx="41" ry="21" fill="#73729c" />
        <ellipse cx="178" cy="957" rx="30" ry="37" fill="#636290" />
        <path d="M155 935 L200 980 M200 935 L155 980 M178 922 V992 M150 957 H208" stroke="#2c2a64" strokeWidth="3" />
        <ellipse cx="795" cy="850" rx="38" ry="26" fill="#73729c" />
        <path d="M770 850 L825 845 M790 835 L800 865" stroke="#2c2a64" strokeWidth="2" />
        <path d="M845 950 L875 960 L865 985 L848 975 Z" fill="#73729c" />
        <ellipse cx="1420" cy="995" rx="35" ry="24" transform="rotate(25 1420 995)" fill="#42406e" stroke="#26244f" strokeWidth="3" />
      </g>

      {/* axis gizmo */}
      <g fill="none" strokeWidth="1.3">
        <path d="M341 884 V871" stroke="#3bd14b" />
        <path d="M341 884 H351" stroke="#e03434" />
        <path d="M341 884 L332 880" stroke="#4060e0" />
      </g>
      <g fontFamily="'Liberation Sans',sans-serif" fontSize="9" textAnchor="middle">
        <text x="341" y="870" fill="#3bd14b">y</text>
        <text x="354" y="881" fill="#e03434">x</text>
        <text x="332" y="880" fill="#4b6cf0">z</text>
      </g>
    </svg>
  )
}

const VP = ({ c, children }: { c?: string; children: ReactNode }) => (
  <div className={`w-[19px] h-[20px] flex items-center justify-center shrink-0 ${c ?? ''}`}>{children}</div>
)
const VPA = ({ c, children }: { c?: string; children: ReactNode }) => (
  <div className={`w-[18.5px] h-[20px] flex items-center justify-center shrink-0 ${c ?? ''}`}>{children}</div>
)
const VSep = ({ w }: { w: string }) => (
  <div className={`${w} flex justify-center shrink-0`}><div className="w-[2px] h-[16px] bg-[#747474]" /></div>
)
const Cam = ({ extra }: { extra?: ReactNode }) => (
  <Ico s={16} vb={16}><rect x="1" y="5" width="9" height="8" rx="1" fill={G} /><polygon points="10,9 15,5 15,13" fill={G} />{extra}</Ico>
)
const Cube = ({ fill = 'none', st = G }: { fill?: string; st?: string }) => (
  <Ico s={16} vb={16}><polygon points="8,1 14,4 14,12 8,15 2,12 2,4" fill={fill} stroke={st} /><Lines d="M2 4 L8 7 L14 4 M8 7 V15" c={st === G ? G : '#dddddd'} /></Ico>
)

function Viewport() {
  return (
    <div className="w-[1322px] shrink-0 border border-[#8c8c8c] mt-[4px] mb-[3px] flex flex-col bg-[#444444]">
      <div className="h-[17px] mb-[2px] flex items-center pl-[8px] text-[11.2px] text-[#c8c8c8] shrink-0">
        {[
          ['View', 'w-[41px]'],
          ['Shading', 'w-[58px]'],
          ['Lighting', 'w-[58px]'],
          ['Show', 'w-[43px]'],
          ['Renderer', 'w-[62px]'],
          ['Panels', 'w-[40px]'],
        ].map(([n, w]) => (
          <span key={n} className={`${w} shrink-0`}>{n}</span>
        ))}
      </div>
      <div className="h-[20px] flex items-center pl-[11px] shrink-0">
        <VSep w="w-[0px]" />
        <VPA c="bg-[#3d9ad0]"><span className="font-bold text-[11px] text-white">A</span></VPA>
        <VPA><Ico s={14} vb={14}><rect x="2" y="2" width="10" height="10" fill={T} /><Lines d="M0 2 H14 M0 12 H14 M2 0 V14 M12 0 V14" c={G} /></Ico></VPA>
        <VPA><div className="w-[14px] h-[14px] bg-[#3d5866]" /></VPA>
        <VPA><div className="w-[14px] h-[14px] rounded-full bg-[#626262]" /></VPA>
        <VPA><div className="w-[14px] h-[14px] bg-[#5a6a5a]" /></VPA>
        <VSep w="w-[12px]" />
        <VP><Cam /></VP>
        <VP><Cam extra={<circle cx="12" cy="4" r="2" fill={T} />} /></VP>
        <VP><Cam extra={<circle cx="5" cy="9" r="2.5" fill={T} />} /></VP>
        <VP><Ico s={16} vb={16}><path d="M4 1 H12 V15 L8 11 L4 15 Z" fill={G} /></Ico></VP>
        <VP><Ico s={16} vb={16}><path d="M9 1 L14 14 H3 Z" fill="none" stroke={G} /><circle cx="6" cy="11" r="2" fill={T} /></Ico></VP>
        <VP><Ico s={16} vb={16}><circle cx="10" cy="6" r="4" fill="none" stroke={T} strokeWidth="1.4" /><Lines d="M7 9 L2 14 M10 0 V3" c={G} w={1.4} /></Ico></VP>
        <VP><Ico s={16} vb={16}><path d="M14 1 L4 11 L2 15 L6 13 L15 3 Z" fill={T} /></Ico></VP>
        <VSep w="w-[12px]" />
        <VP c="bg-[#52809f]"><Ico s={16} vb={16}><rect x="2" y="2" width="12" height="12" fill="none" stroke="#e0e0e0" /><Lines d="M2 6 H14 M2 10 H14 M6 2 V14 M10 2 V14" c="#e0e0e0" /></Ico></VP>
        <VP><Ico s={16} vb={16}><rect x="1" y="3" width="14" height="10" fill="none" stroke={G} /><Lines d="M1 5 H15 M1 11 H15" c={G} /></Ico></VP>
        <VP><Ico s={16} vb={16}><rect x="2" y="2" width="12" height="12" fill="none" stroke={G} /><rect x="6" y="6" width="4" height="4" fill={T} /></Ico></VP>
        <VP c="bg-[#3a3a3a]"><div className="w-[10px] h-[10px] rounded-full bg-[#5c5c5c]" /></VP>
        <VP><Ico s={16} vb={16}><rect x="2" y="2" width="12" height="12" fill="none" stroke={G} /><Lines d="M8 3 V13" c={T} w={2} /></Ico></VP>
        <VP><Ico s={16} vb={16}><rect x="2" y="2" width="12" height="12" fill="none" stroke={G} /><polygon points="8,5 12,12 4,12" fill={T} /></Ico></VP>
        <VP><Ico s={16} vb={16}><rect x="2" y="2" width="12" height="12" fill="none" stroke={G} /><text x="8" y="12" textAnchor="middle" fontFamily="'Liberation Sans',sans-serif" fontSize="10" fontWeight="700" fill={T}>T</text></Ico></VP>
        <VSep w="w-[12px]" />
        <VP><Cube /></VP>
        <VP c="bg-[#52809f]"><Cube fill={T} st="#dddddd" /></VP>
        <VP><Ico s={16} vb={16}><circle cx="8" cy="8" r="6.5" fill={G} /><Lines d="M8 1.5 V14.5 M4 3 V13" c={D} /></Ico></VP>
        <VP><Cube st={G} fill="#3a7d8a" /></VP>
        <VP><Ico s={16} vb={16}><circle cx="8" cy="8" r="6.5" fill={G} /><Lines d="M2 5 H14 M2 8 H14 M2 11 H14 M5 2 V14 M8 2 V14 M11 2 V14" c={D} /></Ico></VP>
        <VP><Ico s={16} vb={16}><circle cx="8" cy="6" r="4" fill={G} /><rect x="6.5" y="10" width="3" height="4" fill={G} /><Lines d="M8 0 V1 M1 6 H2 M14 6 H15 M3 1 L4 2 M13 1 L12 2" c={G} /></Ico></VP>
        <VP><Ico s={16} vb={16}><circle cx="9" cy="8" r="6" fill={T} /><circle cx="3" cy="12" r="2.5" fill={G} /></Ico></VP>
        <VSep w="w-[10px]" />
        <VP><Ico s={16} vb={16}><circle cx="8" cy="6" r="5" fill={G} /><Lines d="M8 11 V15 M5 12 L3 15 M11 12 L13 15" c={T} /></Ico></VP>
        <VP><Ico s={16} vb={16}><circle cx="7" cy="9" r="5" fill="#8a8a8a" /><circle cx="11" cy="5" r="4" fill={G} /></Ico></VP>
        <VP><Ico s={16} vb={16}><Lines d="M11 2 Q4 3 4 8 Q4 13 11 14" c={T} w={1.6} /><Lines d="M12 4 Q14 8 12 12" c={G} w={1.6} /></Ico></VP>
        <VP c="bg-[#3a3a3a]"><div className="w-[10px] h-[13px] bg-[#4e5f68]" /></VP>
        <VSep w="w-[12px]" />
        <VP><Ico s={16} vb={16}><rect x="1" y="1" width="11" height="11" fill="none" stroke={T} strokeDasharray="2 1.5" /><Cur x={7} y={4} /></Ico></VP>
        <VSep w="w-[10px]" />
        <VP><Ico s={16} vb={16}><rect x="5" y="1" width="10" height="10" fill="none" stroke={G} strokeWidth="2" /><rect x="1" y="5" width="10" height="10" fill={G} stroke={D} /></Ico></VP>
        <VP><Ico s={16} vb={16}><rect x="7" y="1" width="8" height="10" fill="none" stroke={G} strokeWidth="1.4" /><rect x="1" y="6" width="8" height="9" fill={G} /></Ico></VP>
        <VP><Ico s={16} vb={16}><rect x="2" y="2" width="12" height="12" fill="none" stroke={G} /><Lines d="M5 4 L11 12" c={G} w={1.4} /></Ico></VP>
        <VSep w="w-[12px]" />
        <VP><Ico s={16} vb={16}><circle cx="8" cy="8" r="6" fill="none" stroke={G} strokeWidth="3" strokeDasharray="5 1.5" /></Ico></VP>
        <div className="w-[37px] h-[16px] ml-[3px] bg-[#2b2b2b] rounded-[2px] text-[11px] leading-[16px] text-[#b4b4b4] pl-[5px] shrink-0">0.00</div>
        <div className="w-[23px] flex justify-center shrink-0"><Ico s={14} vb={14}><Lines d="M8 2 Q3 4 3 7 Q3 10 8 12" c={G} w={2} /><rect x="8" y="3" width="3" height="8" fill={G} /></Ico></div>
        <div className="w-[38px] h-[16px] bg-[#2b2b2b] rounded-[2px] text-[11px] leading-[16px] text-[#b4b4b4] pl-[5px] shrink-0">1.00</div>
        <div className="w-[18px] h-[18px] ml-[3px] bg-[#4f7f9c] flex items-center justify-center shrink-0">
          <div className="w-[13px] h-[13px] rounded-full bg-[#3aa6b4] border border-[#d0d0d0] text-[5.5px] leading-[11px] text-center font-bold text-[#1c3c44]">ON</div>
        </div>
        <div className="w-[198px] h-[17px] ml-[3px] bg-[#595959] rounded-[2px] flex items-center pl-[3px] text-[11px] text-[#cfcfcf] shrink-0">
          <span className="flex-1 whitespace-nowrap">ACES 1.0 SDR-video (sRGB)</span>
          <div className="w-[19px] h-full bg-[#636363] flex items-center justify-center">
            <svg width="9" height="6" viewBox="0 0 9 6"><polygon points="0,0 9,0 4.5,6" fill="#bfbfbf" /></svg>
          </div>
        </div>
      </div>
      <div className="flex-1 relative overflow-hidden">
        <Scene />
        <div className="absolute left-[635px] top-[698px] w-[36px] text-center text-[10.5px] font-semibold text-[#dddddd]">persp1</div>
      </div>
    </div>
  )
}

/* ---------- right panel ---------- */
function RightPanel() {
  return (
    <div className="flex-1 min-w-0 flex ml-[4px] border-l-2 border-[#3a3a3a]">
      <div className="w-[262px] shrink-0 flex flex-col pl-[3px] pr-[3px]">
        <div className="h-[24px] flex items-start pt-[4px] justify-end gap-[5px] pr-[1.5px] shrink-0">
          <Ico s={16} vb={16}><polygon points="8,1 11,6 5,6" fill="#62a03c" /><polygon points="3,9 6,13 0,13" fill="#3f62c0" /><polygon points="13,9 16,13 10,13" fill="#c64646" /><Lines d="M8 5 V10 M4 12 L8 9 L12 12" c={G} /></Ico>
          <Ico s={16} vb={16}><Lines d="M2 10 Q2 4 8 4 Q13 4 13 9" c={T} w={3.5} /><polygon points="10,10 16,10 13,14" fill="#8c8c8c" /></Ico>
          <Ico s={16} vb={16}><Lines d="M2 1 V15 H15" c="#8c8c8c" /><Lines d="M4 12 L14 3" c={T} w={1.6} /></Ico>
        </div>
        <div className="h-[20px] flex items-center pl-[7.5px] text-[11.2px] text-[#c8c8c8] shrink-0">
          <span className="w-[64px]">Channels</span>
          <span className="w-[35px]">Edit</span>
          <span className="w-[48px]">Object</span>
          <span>Show</span>
        </div>
        <div className="flex-1 flex flex-col items-center pt-[228px]">
          <p className="w-[220px] text-center text-[11.5px] leading-[13px] font-semibold text-[#c4c4c4]">
            Select objects in the scene to view,<br />edit and set keyframes on channels<br />(attributes)
          </p>
        </div>
        <div className="mx-auto w-[86px] border-t border-dotted border-[#777777] mb-[10px] shrink-0" />
        <div className="h-[216px] mr-[1px] flex flex-col shrink-0 bg-[#3f3f3f]">
          <div className="h-[17px] flex items-end pl-[2px] bg-[#3a3a3a] shrink-0">
            <div className="w-[58px] h-[17px] bg-[#444444] rounded-t-[3px] flex items-center justify-center text-[11.2px] text-[#e4e4e4]">Display</div>
            <div className="ml-[2px] w-[48px] h-[15px] bg-[#3c3c3c] border border-b-0 border-[#2e2e2e] rounded-t-[3px] flex items-center justify-center text-[11.2px] text-[#7e7e7e]">Anim</div>
          </div>
          <div className="h-[22px] flex items-center pl-[11px] text-[11.2px] text-[#c8c8c8] shrink-0">
            <span className="w-[46px]">Layers</span>
            <span className="w-[57px]">Options</span>
            <span>Help</span>
          </div>
          <div className="h-[25px] flex items-center pl-[154px] shrink-0">
            <div className="w-[23px] flex justify-center"><Ico s={16} vb={16}><polygon points="0,8 8,4 8,12" fill={G} /><polygon points="12,4 16,9 8,9" fill={T} /><rect x="10.5" y="9" width="3" height="3" fill={T} /></Ico></div>
            <div className="w-[27px] flex justify-center"><Ico s={16} vb={16}><polygon points="0,8 8,4 8,12" fill={G} /><polygon points="12,13 16,8 8,8" fill={T} /><rect x="10.5" y="5" width="3" height="3" fill={T} /></Ico></div>
            <div className="w-[24px] flex justify-center"><Ico s={16} vb={16}><polygon points="0,9 9,5 9,13" fill={G} /><Lines d="M12 1 V7 M9 4 H15" c={T} w={2} /></Ico></div>
            <div className="w-[24px] flex justify-center"><Ico s={16} vb={16}><polygon points="0,9 9,5 9,13" fill={G} /><circle cx="12" cy="5" r="3.5" fill={T} /></Ico></div>
          </div>
          <div className="ml-[4px] w-[247px] h-[132px] bg-[#2b2b2b] shrink-0" />
          <div className="ml-[4px] w-[247px] h-[13px] bg-[#393939] flex items-center shrink-0">
            <svg className="ml-[3px]" width="5" height="8" viewBox="0 0 5 8"><polygon points="5,0 5,8 0,4" fill="#c0c0c0" /></svg>
            <div className="w-[154px] h-[9px] ml-[5px] bg-[#5a5a5a] rounded-[4px]" />
            <svg className="ml-auto mr-[3px]" width="5" height="8" viewBox="0 0 5 8"><polygon points="0,0 0,8 5,4" fill="#c0c0c0" /></svg>
          </div>
        </div>
      </div>
      <div className="w-[16px] shrink-0 flex flex-col pt-[3px] items-center">
        <div className="w-full h-[157px] bg-[#444444] flex justify-center pt-[11px] text-[11px] leading-[16px] text-[#dcdcdc] [word-spacing:-0.5px] [writing-mode:vertical-rl] whitespace-nowrap border-b border-[#333333]">
          Channel Box / Layer Editor
        </div>
        <div className="w-full h-[105px] bg-[#3f3f3f] flex justify-center pt-[9px] text-[11.5px] leading-[16px] text-[#8a8a8a] [writing-mode:vertical-rl] whitespace-nowrap border-b border-[#333333]">
          Attribute Editor
        </div>
        <div className="w-full h-[107px] bg-[#3f3f3f] flex justify-center pt-[10px] text-[11.5px] leading-[16px] text-[#8a8a8a] [writing-mode:vertical-rl] whitespace-nowrap border-b border-[#333333]">
          Modeling Toolkit
        </div>
      </div>
    </div>
  )
}

/* ---------- timeline ---------- */
const frames = Array.from({ length: 24 }, (_, i) => (i + 1) * 5)

const TickBand = ({ c }: { c: string }) => (
  <div className="h-[8px] flex pl-[61px] overflow-hidden">
    {frames.map((f) => (
      <div key={f} className={`w-[66.5px] shrink-0 border-l ${c}`} />
    ))}
  </div>
)

const Pb = ({ children }: { children: ReactNode }) => (
  <div className="w-[28px] flex justify-center shrink-0">
    <Ico s={16} vb={16}><g fill="#b8b8b8">{children}</g></Ico>
  </div>
)

function TimeSlider() {
  return (
    <div className="h-[50px] flex shrink-0 bg-[#444444]">
      <div className="w-[16px] shrink-0 flex justify-center pl-0 py-[2px]">
        <div className="h-full border-l-2 border-dotted border-[#6e6e6e] -translate-x-[2px]" />
      </div>
      <div className="w-[1613px] shrink-0 flex flex-col relative overflow-hidden">
        <div className="absolute left-[1152px] top-0 bottom-[1px] w-[13px] bg-[#6a6a6a] opacity-60" />
        <div className="h-[1px]" />
        <TickBand c="border-[#2a2a2a]" />
        <div className="h-[32px] bg-[#2b2b2b] flex pl-[61px]">
          {frames.map((f) => (
            <div key={f} className="w-[66.5px] shrink-0 flex flex-col">
              <div className="h-[16px] pl-[7px] text-[10.5px] leading-[16px] text-[#8c8c8c]">{f}</div>
              <div className="w-px h-[16px] bg-[#9a9a9a]" />
            </div>
          ))}
        </div>
        <div className="h-[2px] ml-[7px] mr-[9px] bg-[#5e5e5e]" />
        <div className="h-[6px] flex pl-[61px] overflow-hidden">
          {frames.map((f) => (
            <div key={f} className="w-[66.5px] shrink-0 border-l border-[#2a2a2a]" />
          ))}
        </div>
        <div className="absolute left-[1152px] top-[9px] h-[32px] w-[13px] bg-[#444444] opacity-50" />
        <div className="absolute left-[1152px] top-[24px] w-[13px] h-[16px] text-center text-[10.5px] leading-[16px] text-white">87</div>
      </div>
      <div className="flex-1 flex items-center pl-[9px]">
        <div className="w-[51px] h-[20px] bg-[#2b2b2b] rounded-[2px] pl-[3px] text-[11px] leading-[20px] text-[#bdbdbd] shrink-0">87</div>
        <div className="w-[4px] shrink-0" />
        <Pb><rect x="1" y="3" width="2" height="10" /><polygon points="9,3 9,13 4,8" /><polygon points="15,3 15,13 10,8" /></Pb>
        <Pb><rect x="3" y="2" width="2" height="12" /><polygon points="13,2 13,14 6,8" /></Pb>
        <Pb><rect x="3" y="0" width="2.5" height="16" fill={O} /><polygon points="14,2 14,14 7,8" /></Pb>
        <Pb><polygon points="13,1 13,15 3,8" /></Pb>
        <Pb><polygon points="3,1 3,15 13,8" /></Pb>
        <Pb><rect x="11" y="0" width="2.5" height="16" fill={O} /><polygon points="2,2 2,14 9,8" /></Pb>
        <Pb><rect x="11" y="2" width="2" height="12" /><polygon points="3,2 3,14 10,8" /></Pb>
        <Pb><rect x="13" y="3" width="2" height="10" /><polygon points="1,3 1,13 6,8" /><polygon points="7,3 7,13 12,8" /></Pb>
      </div>
    </div>
  )
}

function RangeSlider() {
  return (
    <div className="h-[36px] flex items-center shrink-0 bg-[#444444] pl-[17px]">
      <div className="w-[50px] h-[20px] bg-[#2b2b2b] rounded-[2px] pl-[6px] text-[11px] leading-[20px] text-[#bdbdbd] shrink-0">1</div>
      <div className="w-[1090px] h-[20px] ml-[9px] bg-[#2b2b2b] rounded-[2px] flex items-center pl-[5px] shrink-0">
        <div className="w-[659px] h-[16px] bg-[#3f3f3f] flex items-center text-[11px] text-[#c8c8c8] relative">
          <div className="w-[7px] h-full bg-[#a0a0a0]" />
          <span className="ml-[8px]">1</span>
          <div className="absolute left-[326px] top-[2px] h-[12px] border-l-2 border-dotted border-[#777777]" />
          <span className="ml-auto mr-[9px] text-[#ededed]">120</span>
          <div className="w-[7px] h-full bg-[#a0a0a0]" />
        </div>
      </div>
      <div className="w-[50px] h-[20px] ml-[9px] bg-[#2b2b2b] rounded-[2px] pl-[3px] text-[11px] leading-[20px] text-[#bdbdbd] shrink-0">200</div>
      <div className="w-[42px] flex justify-center shrink-0"><div className="w-[2px] h-[18px] bg-[#7a7a7a]" /></div>
      <div className="w-[22px] flex justify-center shrink-0">
        <Ico s={22} vb={22}><path d="M5 3 H14 V21 L9.5 17 L5 21 Z" fill="#e0713c" /><Lines d="M15 1 V10 M11 5 H19" c="#e0e0e0" w={2.5} /></Ico>
      </div>
      <div className="w-[42px] flex justify-center shrink-0"><div className="w-[2px] h-[18px] bg-[#7a7a7a]" /></div>
      <div className="w-[21px] flex justify-center pb-[4px] shrink-0">
        <svg width="9" height="7" viewBox="0 0 9 7"><polygon points="0.5,0.5 8.5,0.5 4.5,6.5" fill="none" stroke="#9a9a9a" /></svg>
      </div>
      <div className="w-[102px] h-[20px] bg-[#3c3c3c] border border-[#505050] rounded-[2px] pl-[5px] text-[11px] leading-[18px] text-[#bdbdbd] shrink-0 whitespace-nowrap">No Character Set</div>
      <div className="w-[30px] flex justify-center pl-[6px] pb-[4px] shrink-0">
        <svg width="9" height="7" viewBox="0 0 9 7"><polygon points="0.5,0.5 8.5,0.5 4.5,6.5" fill="none" stroke="#9a9a9a" /></svg>
      </div>
      <div className="w-[102px] h-[20px] bg-[#3c3c3c] border border-[#505050] rounded-[2px] pl-[5px] text-[11px] leading-[18px] text-[#bdbdbd] shrink-0 whitespace-nowrap">No Anim Layer</div>
      <div className="w-[42px] flex justify-center shrink-0"><div className="w-[2px] h-[18px] bg-[#7a7a7a]" /></div>
      <div className="w-[94px] h-[19px] ml-[3px] bg-[#5b5b5b] rounded-[2px] flex items-center text-[11px] text-[#c8c8c8] pl-[3px] shrink-0">
        <span className="flex-1">24 fps</span>
        <div className="w-[19px] h-full bg-[#696969] flex items-center justify-center"><svg width="9" height="6" viewBox="0 0 9 6"><polygon points="0,0 9,0 4.5,6" fill="#c8c8c8" /></svg></div>
      </div>
      <div className="w-[45px] flex justify-center shrink-0">
        <Ico s={18} vb={18}><Lines d="M3 13 V7 H13 M15 5 V11 H5" c="#c8c8c8" w={2.2} /><polygon points="12,3 17,7 12,10" fill="#c8c8c8" /><polygon points="6,8 1,11 6,15" fill="#c8c8c8" /></Ico>
      </div>
      <div className="w-[24px] h-[24px] bg-[#52809f] flex items-center justify-center shrink-0">
        <Ico s={20} vb={20}><rect x="2" y="5" width="16" height="13" fill="#e08a3c" /><rect x="4" y="7" width="12" height="9" fill="#2b2b2b" /><Lines d="M7 15 V10 M10 15 V8 M13 15 V11" c="#e0e0e0" w={2} /><polygon points="13,1 18,5 13,5" fill="#d0d0d0" /></Ico>
      </div>
      <div className="w-[38px] flex justify-center shrink-0"><div className="w-[2px] h-[18px] bg-[#7a7a7a]" /></div>
      <div className="w-[29px] flex justify-center shrink-0">
        <Ico s={18} vb={18}><polygon points="1,7 4,7 9,3 9,15 4,11 1,11" fill="#c0c0c0" /><Lines d="M11 5 Q14 9 11 13 M13 3 Q17 9 13 15" c="#9a9a9a" /></Ico>
      </div>
      <div className="w-[29px] flex justify-center shrink-0">
        <Ico s={18} vb={18}><circle cx="9" cy="9" r="7" fill="none" stroke="#8c8c8c" strokeWidth="1.4" /><Lines d="M9 3 V15" c={O} /><Lines d="M3 9 H15" c="#8c8c8c" /></Ico>
      </div>
      <div className="w-[29px] flex justify-center shrink-0">
        <Ico s={20} vb={20}><circle cx="4" cy="4" r="2.5" fill="none" stroke="#a8a8a8" /><circle cx="13" cy="4" r="2.4" fill={O} /><Lines d="M12 7 L10 13 L5 18 M10 13 L15 17 L16 19 M11 8 L16 11 M11 8 L6 10" c={O} w={2} /></Ico>
      </div>
    </div>
  )
}

function CommandLine() {
  return (
    <div className="h-[36px] flex items-center shrink-0 bg-[#444444] pt-[1px]">
      <div className="w-[15px] shrink-0" />
      <div className="w-[16px] h-[17px] bg-[#7fb23e] rounded-[50%] flex items-center justify-center text-[12px] font-bold leading-none text-[#2b3a1e] shrink-0">?</div>
      <span className="ml-[9px] w-[776px] text-[11px] text-[#d4d4d4] whitespace-nowrap shrink-0">Select Tool: select an object</span>
      <div className="h-full w-[17px] border-l-2 border-[#3a3a3a] shrink-0" />
      <span className="w-[29px] text-[11px] text-[#cccccc] shrink-0">MEL</span>
      <div className="w-[398px] h-[20px] bg-[#2b2b2b] rounded-[2px] shrink-0" />
      <div className="w-[5px] shrink-0" />
      <div className="w-[618px] h-[20px] bg-[#2b2b2b] rounded-[2px] shrink-0" />
      <div className="w-[37px] flex justify-center shrink-0">
        <div className="w-[17px] h-[22px] bg-[#bdbdbd] flex flex-col">
          <div className="h-[4px] border-b border-[#444444]" />
          <div className="flex-1 bg-[#3c3c3c] m-[1px] text-[#d8d8d8] text-[9px] leading-[15px] text-center">{'{;}'}</div>
        </div>
      </div>
    </div>
  )
}

/* ---------- taskbar ---------- */
const TB = ({ children, w, line, bg }: { children: ReactNode; w: string; line?: string; bg?: string }) => (
  <div className={`${w} h-[40px] relative flex items-center justify-center shrink-0 ${bg ?? ''}`}>
    {children}
    {line && <div className={`absolute bottom-0 h-[2px] ${line}`} />}
  </div>
)

const Planet = () => (
  <svg width="80" height="40" viewBox="0 0 80 40" className="block">
    <circle cx="50" cy="40" r="40" fill="#a78a3c" />
    <circle cx="52" cy="42" r="38" fill="#2a5c98" />
    <circle cx="56" cy="46" r="36" fill="#1a2a3c" />
    <g fill="#d8a838">
      <circle cx="40" cy="27" r="2.5" /><circle cx="50" cy="18" r="1.5" /><circle cx="47" cy="33" r="1.5" /><circle cx="35" cy="36" r="1.5" />
      <circle cx="58" cy="26" r="2" /><circle cx="62" cy="13" r="1" /><circle cx="70" cy="30" r="1.5" /><circle cx="53" cy="36" r="1" />
    </g>
    <circle cx="75" cy="38" r="8" fill="#1d5ba8" />
  </svg>
)

function Taskbar() {
  const pink = 'left-[5px] right-[4px] bg-[#e2a4e8]'
  return (
    <div className="h-[40px] flex items-center bg-[#1b1b1b] shrink-0 font-['Roboto',sans-serif] text-white">
      <div className="w-[48px] flex justify-center shrink-0">
        <svg width="17" height="17" viewBox="0 0 17 17"><g fill="#ffffff"><polygon points="0,2.5 7.5,1.4 7.5,8 0,8" /><polygon points="8.5,1.2 17,0 17,8 8.5,8" /><polygon points="0,9 7.5,9 7.5,15.6 0,14.5" /><polygon points="8.5,9 17,9 17,17 8.5,15.8" /></g></svg>
      </div>
      <div className="w-[288px] h-[40px] bg-[#2a2a2a] border border-[#5f5f5f] border-b-0 flex items-center overflow-hidden shrink-0 relative">
        <svg className="ml-[11px]" width="15" height="17" viewBox="0 0 15 17"><circle cx="9.5" cy="5.5" r="5" fill="none" stroke="#e0e0e0" strokeWidth="1.2" /><path d="M6 9.5 L1 16" stroke="#e0e0e0" strokeWidth="1.4" /></svg>
        <span className="ml-[13px] text-[15px] text-[#d0d0d0] whitespace-nowrap">Type here to search</span>
        <div className="absolute right-0 top-0"><Planet /></div>
      </div>
      <TB w="w-[49px]">
        <svg width="16" height="18" viewBox="0 0 16 18"><g fill="none" stroke="#e4e4e4"><rect x="0.5" y="4.5" width="8" height="9" /><path d="M0 2 H9 M0 16 H9" /><path d="M11.5 1 H15 M11.5 5 H15 V1 M11.5 13 H15 V17 H11.5" /></g></svg>
      </TB>
      <TB w="w-[50px]">
        <svg width="24" height="26" viewBox="0 0 24 26"><polygon points="12,0 24,9 24,26 0,26 0,9" fill="#0f8fe0" /><polygon points="0,9 12,0 24,9 12,19" fill="#2fb4f5" /><polygon points="3,11 21,11 12,18" fill="#e8f6ff" /></svg>
      </TB>
      <TB w="w-[49px]" line={pink}>
        <svg width="26" height="26" viewBox="0 0 26 26"><circle cx="13" cy="13" r="13" fill="#0e71c6" /><path d="M1 12 C2 4 9 0 15 0 C22 0 26 7 25 14 L12 14 C12 10 9 9 6 10 C4 11 2 11 1 12 Z" fill="#3dd18d" /><path d="M1 12 C1 22 9 26 17 25 C12 24 8 19 9 14 C9 11 5 10 1 12 Z" fill="#0a58a6" /><path d="M13 14 H25 C24 20 20 24 16 24 C12 23 11 17 13 14 Z" fill="#1ba5e8" /></svg>
      </TB>
      <TB w="w-[48px]" line={pink}>
        <svg width="24" height="24" viewBox="0 0 24 24"><path d="M0 2 H9 L11 4 H23 V24 H0 Z" fill="#e9b64a" /><rect x="0" y="7" width="23" height="17" fill="#f4cd59" /><rect x="7" y="15" width="10" height="9" fill="#2f8cd8" /><rect x="10" y="19" width="4" height="5" fill="#f4cd59" /></svg>
      </TB>
      <TB w="w-[49px]">
        <svg width="24" height="28" viewBox="0 0 24 28"><rect x="1" y="6" width="22" height="22" rx="3" fill="#f2f2f2" /><path d="M7 7 V4 Q7 1 12 1 Q17 1 17 4 V7" fill="none" stroke="#2f9fe0" strokeWidth="2" /><rect x="7" y="12" width="4.5" height="4.5" fill="#e8502a" /><rect x="12.5" y="12" width="4.5" height="4.5" fill="#76b82a" /><rect x="7" y="17.5" width="4.5" height="4.5" fill="#1e90e0" /><rect x="12.5" y="17.5" width="4.5" height="4.5" fill="#f5b800" /></svg>
      </TB>
      <TB w="w-[50px]">
        <svg width="24" height="22" viewBox="0 0 24 22"><path d="M1 4 L8 1 L14 2 L22 1 L24 7 L20 8 L22 13 L18 14 L18 20 L14 22 L13 16 L9 18 L9 13 L4 13 L6 9 Z" fill="#d81c1c" /></svg>
      </TB>
      <TB w="w-[49px]" line={pink}>
        <svg width="24" height="30" viewBox="0 0 24 30"><ellipse cx="12" cy="15" rx="11" ry="14" fill="none" stroke="#e02a3c" strokeWidth="2" /><ellipse cx="12" cy="15" rx="5.5" ry="12.5" fill="none" stroke="#e02a3c" strokeWidth="2" /></svg>
      </TB>
      <TB w="w-[50px]">
        <svg width="22" height="28" viewBox="0 0 22 28"><path d="M2 2 L12 6 V14 L4 20 L2 18 Z" fill="#8a6ce0" /><path d="M8 6 L20 11 V18 L8 26 L2 22 L14 14 Z" fill="#5b8cf0" /><path d="M14 14 L20 11 V18 L8 26 Z" fill="#c4a0f0" /></svg>
      </TB>
      <TB w="w-[48px]" bg="bg-[#a35a26]" line="left-0 right-0 bg-[#ff7a1a]">
        <svg width="30" height="32" viewBox="0 0 30 32">
          <circle cx="13" cy="14" r="12" fill="#5865f2" />
          <path d="M7 9 Q13 6 19 9 L21 17 Q18 19 16.5 18 L15.5 16.5 H10.5 L9.5 18 Q8 19 5 17 Z" fill="#ffffff" />
          <circle cx="10.5" cy="13" r="1.6" fill="#5865f2" /><circle cx="15.5" cy="13" r="1.6" fill="#5865f2" />
          <circle cx="22" cy="23" r="7" fill="#ed4245" />
          <text x="22" y="27" textAnchor="middle" fontFamily="'Liberation Sans',sans-serif" fontWeight="700" fontSize="11" fill="#ffffff">1</text>
        </svg>
      </TB>
      <TB w="w-[49px]" line={pink}>
        <svg width="24" height="30" viewBox="0 0 24 30"><ellipse cx="12" cy="15" rx="11" ry="14" fill="#0b2a2a" /><path d="M12 4 L17 11 L14 15 L15 25 H9 L10 15 L7 11 Z" fill="#128a6e" /></svg>
      </TB>
      <TB w="w-[49px]" line={pink}>
        <svg width="26" height="28" viewBox="0 0 26 28"><polygon points="8,1 25,4 18,27 1,23" fill="#cfeaf0" /><polygon points="8,9 22,11 17,27 3,23" fill="#58a8b8" /><path d="M8 1 L25 4 L24 7 L7 4 Z" fill="#e8e8e8" /></svg>
      </TB>
      <TB w="w-[50px]" bg="bg-[#3c3c3c]" line="left-0 right-0 bg-[#e2a4e8]">
        <MayaLogo w={24} h={28} />
      </TB>
      <div className="flex-1" />
      <svg className="shrink-0" width="24" height="30" viewBox="0 0 24 30"><ellipse cx="10" cy="15" rx="10" ry="13" fill="#f08c1e" /><circle cx="19" cy="5" r="3.2" fill="#cc2a1a" /><path d="M6 22 Q6 17 11 17 Q13 13 17 15 Q22 15 22 19 Q22 22 18 22 Z" fill="#a8d0ec" /></svg>
      <span className="ml-[4px] text-[14px] text-[#ececec] whitespace-nowrap">75°F</span>
      <span className="ml-[8px] w-[91px] text-[14px] text-[#ececec] whitespace-nowrap">Mostly sunny</span>
      <div className="w-[10px] shrink-0" />
      <div className="w-[24px] flex justify-center shrink-0"><svg width="14" height="8" viewBox="0 0 14 8"><path d="M1 7 L7 1 L13 7" fill="none" stroke="#f0f0f0" strokeWidth="1.2" /></svg></div>
      <div className="w-[24px] flex justify-center shrink-0"><svg width="14" height="20" viewBox="0 0 14 20"><rect x="2" y="4" width="7" height="11" rx="1.5" fill="none" stroke="#f0f0f0" /><polygon points="9,9 13,6 13,13 9,11" fill="#f0f0f0" /><path d="M1 1 H12 M1 19 H12" stroke="#f0f0f0" strokeDasharray="3 1" /></svg></div>
      <div className="w-[24px] flex justify-center shrink-0"><svg width="18" height="12" viewBox="0 0 18 12"><path d="M4 12 Q0 12 0 8 Q1 5 4 5 Q6 0 11 1 Q14 2 15 5 Q18 6 18 9 Q17 12 14 12 Z" fill="#e4e4e4" /></svg></div>
      <div className="w-[24px] flex justify-center shrink-0"><svg width="12" height="22" viewBox="0 0 12 22"><rect x="3" y="0" width="6" height="14" rx="3" fill="#f0f0f0" /><path d="M1 9 Q1 17 6 17 Q11 17 11 9 M6 17 V21 M2 21 H10" fill="none" stroke="#f0f0f0" /></svg></div>
      <div className="w-[24px] flex justify-center shrink-0"><svg width="16" height="16" viewBox="0 0 16 16"><path d="M1 8 Q8 1 15 3 M3 11 Q8 6 13 7 M6 14 Q8 11 10 11" fill="none" stroke="#f0f0f0" /><circle cx="3" cy="15" r="1.2" fill="#f0f0f0" /></svg></div>
      <div className="w-[20px] flex justify-center shrink-0"><svg width="17" height="16" viewBox="0 0 17 16"><polygon points="1,5 4,5 9,1 9,15 4,11 1,11" fill="none" stroke="#f0f0f0" /><path d="M11 5 Q13 8 11 11 M13 3 Q16 8 13 13" fill="none" stroke="#f0f0f0" /></svg></div>
      <div className="w-[38px] flex justify-center shrink-0"><svg width="16" height="22" viewBox="0 0 16 22"><path d="M2 20 L13 3 Q15 1 15 4 L6 19 M1 21 L5 18 M2 12 Q7 9 8 13 Q9 16 14 13" fill="none" stroke="#f0f0f0" strokeWidth="1.2" /></svg></div>
      <div className="w-[72px] flex flex-col items-center text-[12.5px] leading-[18px] text-[#ececec] shrink-0">
        <span>8:05 PM</span>
        <span>4/12/2023</span>
      </div>
      <div className="w-[44px] flex justify-center relative shrink-0">
        <svg width="18" height="20" viewBox="0 0 18 20"><path d="M1 1 H17 V14 H8 L5 18 V14 H1 Z" fill="#f0f0f0" /><path d="M4 5 H14 M4 8 H14 M4 11 H10" stroke="#1b1b1b" /></svg>
        <div className="absolute left-[23px] top-[6px] w-[15px] h-[15px] rounded-full bg-[#1b1b1b] border border-[#e0e0e0] flex items-center justify-center text-[11px] font-bold leading-none">2</div>
      </div>
    </div>
  )
}

const menus: [string, string][] = [
  ['File', 'w-[33px]'], ['Edit', 'w-[35px]'], ['Create', 'w-[48px]'], ['Select', 'w-[45px]'], ['Modify', 'w-[51px]'],
  ['Display', 'w-[51px]'], ['Windows', 'w-[64px]'], ['Mesh', 'w-[43px]'], ['Edit Mesh', 'w-[66px]'], ['Mesh Tools', 'w-[73px]'],
  ['Mesh Display', 'w-[84px]'], ['Curves', 'w-[48px]'], ['Surfaces', 'w-[59px]'], ['Deform', 'w-[52px]'], ['UV', 'w-[30px]'],
  ['Generate', 'w-[62px]'], ['Cache', 'w-[46px]'], ['Arnold', 'w-[51px]'], ['Help', 'w-[40px]'],
]

export default function App() {
  return (
    <div className="w-[1920px] h-[1080px] overflow-hidden flex flex-col bg-[#333333] font-['Open_Sans',sans-serif]">
      {/* title bar */}
      <div className="h-[23px] bg-white flex items-center shrink-0 font-['Roboto',sans-serif] text-black">
        <div className="w-[23px] flex justify-center shrink-0"><MayaLogo w={16} h={19} /></div>
        <span className="text-[12px] tracking-[-0.135px] whitespace-nowrap">VikingVoyageForPeerReview.mb* - Autodesk MAYA 2024: C:\Users\matth\Documents\git\ModelingClass2023\3dBasics\Maya\scenes\TheEnd\VikingVoyageForPeerReview.mb</span>
        <div className="flex-1" />
        <div className="w-[46px] flex justify-center shrink-0"><div className="w-[10px] h-px bg-black" /></div>
        <div className="w-[46px] flex justify-center shrink-0"><svg width="10" height="12" viewBox="0 0 10 12"><rect x="1.5" y="3.5" width="5" height="7" fill="none" stroke="#000000" /><path d="M3.5 3 V1.5 H8.5 V8.5 H7" fill="none" stroke="#000000" /></svg></div>
        <div className="w-[46px] flex justify-center mr-[1px] shrink-0"><svg width="11" height="11" viewBox="0 0 11 11"><path d="M0.5 0.5 L10.5 10.5 M10.5 0.5 L0.5 10.5" stroke="#000000" /></svg></div>
      </div>

      {/* main menu */}
      <div className="h-[27px] flex items-center bg-[#444444] pl-[9px] text-[11px] text-[#cdcdcd] shrink-0">
        {menus.map(([n, w]) => (
          <span key={n} className={`${w} shrink-0 whitespace-nowrap`}>{n}</span>
        ))}
        <div className="flex-1" />
        <span className="text-[#bcbcbc] mr-[5px]">Workspace:</span>
        <div className="w-[192px] h-[19px] bg-[#5b5b5b] flex items-center pl-[3px] text-[#c4c4c4]">
          <span className="flex-1">General</span>
          <div className="w-[19px] h-full bg-[#696969] flex items-center justify-center"><svg width="9" height="6" viewBox="0 0 9 6"><polygon points="0,0 9,0 4.5,6" fill="#b4b4b4" /></svg></div>
        </div>
        <div className="w-[28px] flex justify-center">
          <svg width="12" height="17" viewBox="0 0 12 17"><rect x="0" y="7" width="12" height="10" fill="#cfcfcf" /><path d="M3 7 V4 Q3 1 6 1 Q9 1 9 4 V7" fill="none" stroke="#cfcfcf" strokeWidth="1.6" /></svg>
        </div>
      </div>

      <StatusLine />
      <div className="h-[2px] bg-[#353535] shrink-0" />
      <Shelf />
      <div className="h-[2px] bg-[#353535] shrink-0" />

      <div className="h-[766px] flex bg-[#444444] shrink-0">
        <ToolBox />
        <Outliner />
        <div className="w-[4px] shrink-0" />
        <Viewport />
        <RightPanel />
      </div>
      <div className="h-px bg-[#353535] shrink-0" />
      <TimeSlider />
      <div className="h-px bg-[#353535] shrink-0" />
      <RangeSlider />
      <div className="h-[2px] bg-[#353535] shrink-0" />
      <CommandLine />
      <Taskbar />
    </div>
  )
}
